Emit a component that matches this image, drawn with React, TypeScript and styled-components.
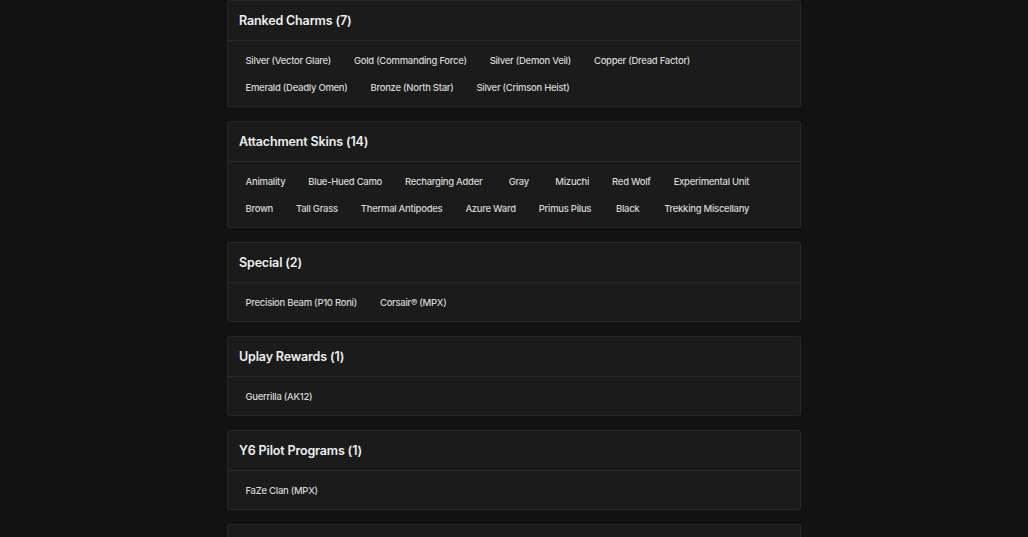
import React from "react";
import styled, { createGlobalStyle } from "styled-components";

const Global = createGlobalStyle`
  html, body { margin: 0; padding: 0; background: #121212; }
  body { font-family: "Inter", "Noto Sans", sans-serif; color: #e6e6e6; }
`;

const Page = styled.div`
  width: 574px;
  margin: 0 auto;
  display: flex;
  flex-direction: column;
  gap: 14px;
`;

const Card = styled.section`
  background: #1b1b1b;
  border: 1px solid #272727;
  border-radius: 2px;
`;

const Header = styled.h2`
  margin: 0;
  height: 39px;
  display: flex;
  align-items: center;
  padding: 0 11px;
  font-size: 12.5px;
  letter-spacing: -0.15px;
  font-weight: 600;
  color: #efefef;
  border-bottom: 1px solid #272727;
`;

const Body = styled.div`
  display: flex;
  flex-wrap: wrap;
  padding: 6px 6px 5px;
`;

const Item = styled.span`
  height: 27px;
  display: flex;
  align-items: center;
  justify-content: center;
  min-width: 50px;
  box-sizing: border-box;
  padding: 0 11.5px;
  font-size: 9.5px;
  letter-spacing: -0.28px;
  font-weight: 500;
  color: #d6d6d6;
  white-space: nowrap;
`;

const RowBreak = styled.div`
  flex-basis: 100%;
  height: 0;
`;

const sections: { title: string; items: string[]; breakAt?: number }[] = [
  {
    title: "Ranked Charms (7)",
    breakAt: 4,
    items: [
      "Silver (Vector Glare)",
      "Gold (Commanding Force)",
      "Silver (Demon Veil)",
      "Copper (Dread Factor)",
      "Emerald (Deadly Omen)",
      "Bronze (North Star)",
      "Silver (Crimson Heist)",
    ],
  },
  {
    title: "Attachment Skins (14)",
    breakAt: 7,
    items: [
      "Animality",
      "Blue-Hued Camo",
      "Recharging Adder",
      "Gray",
      "Mizuchi",
      "Red Wolf",
      "Experimental Unit",
      "Brown",
      "Tall Grass",
      "Thermal Antipodes",
      "Azure Ward",
      "Primus Pilus",
      "Black",
      "Trekking Miscellany",
    ],
  },
  { title: "Special (2)", items: ["Precision Beam (P10 Roni)", "Corsair® (MPX)"] },
  { title: "Uplay Rewards (1)", items: ["Guerrilla (AK12)"] },
  { title: "Y6 Pilot Programs (1)", items: ["FaZe Clan (MPX)"] },
  { title: "Esports (1)", items: ["Team Liquid (R4-C)"] },
];

export default function App() {
  return (
    <>
      <Global />
      <Page>
        {sections.map((s) => (
          <Card key={s.title}>
            <Header>{s.title}</Header>
            <Body>
              {s.items.map((it, i) => (
                <React.Fragment key={it}>
                  {s.breakAt === i && <RowBreak />}
                  <Item>{it}</Item>
                </React.Fragment>
              ))}
            </Body>
          </Card>
        ))}
      </Page>
    </>
  );
}
